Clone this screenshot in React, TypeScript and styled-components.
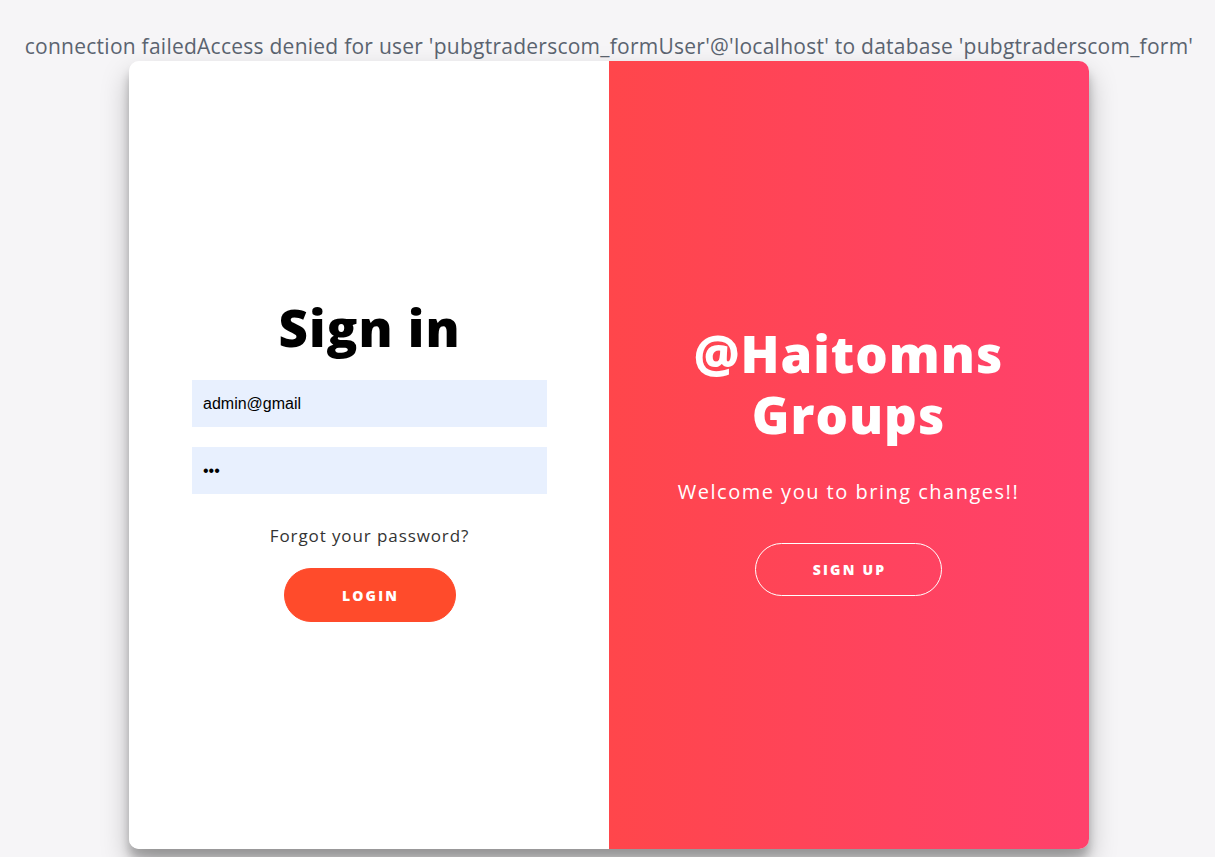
import React from "react";
import styled, { createGlobalStyle } from "styled-components";

const GlobalStyle = createGlobalStyle`
  * { box-sizing: border-box; }
  html, body { margin: 0; padding: 0; }
  body {
    background: #f6f5f7;
    font-family: "Open Sans", "DejaVu Sans", sans-serif;
    overflow: hidden;
  }
`;

const Page = styled.div`
  display: flex;
  flex-direction: column;
  align-items: center;
  height: 857px;
`;

const ErrorLine = styled.div`
  margin: 31px 0 0 3px;
  font-size: 21px;
  line-height: 30px;
  color: #5b6470;
  letter-spacing: 0.25px;
  white-space: nowrap;
`;

const Container = styled.div`
  display: grid;
  grid-template-columns: 1fr 1fr;
  width: 960px;
  height: 788px;
  margin-left: 2px;
  border-radius: 10px;
  overflow: hidden;
  box-shadow: 0 14px 28px rgba(0, 0, 0, 0.25), 0 10px 10px rgba(0, 0, 0, 0.22);
`;

const Panel = styled.div<{ $accent?: boolean }>`
  display: flex;
  flex-direction: column;
  align-items: center;
  justify-content: center;
  text-align: center;
  padding: ${(p) => (p.$accent ? "9px 50px 0" : "9px 49px 0 51px")};
  background: ${(p) =>
    p.$accent ? "linear-gradient(to right, #ff464b, #ff416c)" : "#ffffff"};
  color: ${(p) => (p.$accent ? "#ffffff" : "#000000")};
`;

const Title = styled.h1`
  margin: 0;
  font-size: 51px;
  line-height: 61px;
  font-weight: 800;
  letter-spacing: 1px;
`;

const Input = styled.input<{ $gap?: string }>`
  width: 355px;
  height: 47px;
  flex: none;
  border: none;
  outline: none;
  background: #e8f0fe;
  padding: 0 11px;
  font-family: "Liberation Sans", Arial, sans-serif;
  font-size: 16px;
  color: #000;
  margin-top: ${(p) => p.$gap ?? "20px"};
`;

const Forgot = styled.a`
  margin-top: 31px;
  color: #333;
  font-size: 17px;
  line-height: 22px;
  letter-spacing: 0.9px;
  text-decoration: none;
`;

const Button = styled.button<{ $ghost?: boolean }>`
  display: flex;
  align-items: center;
  justify-content: center;
  flex: none;
  padding: 0 0 0 2px;
  border-radius: 27px;
  border: 1px solid ${(p) => (p.$ghost ? "#ffffff" : "#ff4b2b")};
  background: ${(p) => (p.$ghost ? "transparent" : "#ff4b2b")};
  color: #fff;
  font-family: "Open Sans", "DejaVu Sans", sans-serif;
  font-size: 14px;
  font-weight: 800;
  letter-spacing: 2.2px;
  text-transform: uppercase;
  cursor: pointer;
`;

const LoginButton = styled(Button)`
  width: 172px;
  height: 54px;
  margin-top: 21px;
`;

const SignUpButton = styled(Button)`
  width: 187px;
  height: 53px;
  margin-top: 38px;
`;

const Subtitle = styled.p`
  margin: 34px 0 0;
  font-size: 20px;
  line-height: 26px;
  letter-spacing: 1.5px;
`;

export default function App() {
  return (
    <>
      <GlobalStyle />
      <Page>
        <ErrorLine>
          connection failedAccess denied for user 'pubgtraderscom_formUser'@'localhost' to database 'pubgtraderscom_form'
        </ErrorLine>
        <Container>
          <Panel>
            <Title>Sign in</Title>
            <Input $gap="22px" type="email" defaultValue="admin@gmail" />
            <Input type="password" defaultValue="123" />
            <Forgot href="#">Forgot your password?</Forgot>
            <LoginButton>Login</LoginButton>
          </Panel>
          <Panel $accent>
            <Title>
              @Haitomns
              <br />
              Groups
            </Title>
            <Subtitle>Welcome you to bring changes!!</Subtitle>
            <SignUpButton $ghost>Sign Up</SignUpButton>
          </Panel>
        </Container>
      </Page>
    </>
  );
}
